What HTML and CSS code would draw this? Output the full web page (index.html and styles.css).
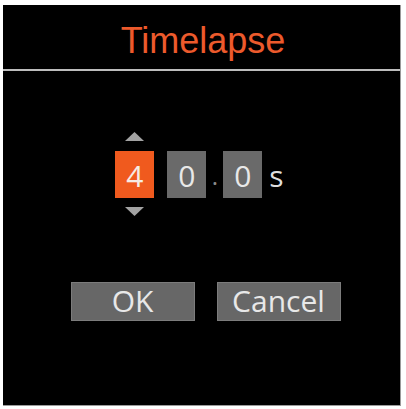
FILE: index.html
```html
<!DOCTYPE html>
<html>
<head>
<meta charset="utf-8">
<link rel="stylesheet" href="styles.css">
</head>
<body>
<div class="screen">
  <div class="header">Timelapse</div>
  <div class="picker">
    <div class="digit-col">
      <svg class="arrow arrow-up" width="19" height="9" viewBox="0 0 19 9"><polygon points="9.5,0 19,9 0,9"/></svg>
      <div class="box box-active">4</div>
      <svg class="arrow arrow-down" width="19" height="9" viewBox="0 0 19 9"><polygon points="0,0 19,0 9.5,9"/></svg>
    </div>
    <div class="box box-plain">0</div>
    <div class="sep">.</div>
    <div class="box box-plain">0</div>
    <div class="unit">s</div>
  </div>
  <div class="buttons">
    <div class="btn">OK</div>
    <div class="btn">Cancel</div>
  </div>
</div>
</body>
</html>
```
FILE: styles.css
```css
html, body {
  margin: 0;
  padding: 0;
  background: #ffffff;
}
body {
  width: 406px;
  height: 409px;
  overflow: hidden;
}
.screen {
  margin: 5px 0 0 3px;
  width: 398px;
  height: 401px;
  background: #000;
  border-right: 1px solid #9a9a9a;
  border-bottom: 1px solid #9a9a9a;
  box-sizing: border-box;
  font-family: "Open Sans", "Liberation Sans", sans-serif;
}
.header {
  padding-top: 15px;
  padding-bottom: 8px;
  height: 41px;
  line-height: 41px;
  text-align: center;
  font-family: "Liberation Sans", Arial, sans-serif;
  font-size: 36px;
  color: #ec5a2c;
  border-bottom: 2px solid #bdbdbd;
  padding-left: 3px;
}
.picker {
  margin-top: 61px;
  display: flex;
  justify-content: center;
  align-items: flex-start;
  padding-right: 4px;
}
.digit-col {
  display: flex;
  flex-direction: column;
  align-items: center;
}
.arrow {
  display: block;
  fill: #a3a3a3;
}
.arrow-up {
  margin-bottom: 10px;
}
.arrow-down {
  margin-top: 9px;
}
.box {
  width: 39px;
  height: 47px;
  box-sizing: border-box;
  padding-top: 2px;
  line-height: 45px;
  text-align: center;
  font-size: 30px;
}
.box-active {
  background: #f05a1e;
  color: #f6ece4;
}
.box-plain {
  margin-top: 19px;
  background: #6a6a6a;
  color: #e8e8e8;
}
.digit-col + .box-plain {
  margin-left: 13px;
}
.sep {
  margin-top: 19px;
  width: 17px;
  height: 47px;
  padding-top: 2px;
  box-sizing: border-box;
  line-height: 45px;
  text-align: center;
  font-size: 24px;
  color: #8a8a8a;
}
.unit {
  margin-top: 19px;
  margin-left: 7px;
  height: 47px;
  padding-top: 2px;
  box-sizing: border-box;
  line-height: 45px;
  font-size: 30px;
  color: #dedede;
}
.buttons {
  margin-top: 66px;
  display: flex;
  justify-content: center;
  gap: 22px;
  padding-left: 8px;
}
.btn {
  width: 124px;
  height: 39px;
  box-sizing: border-box;
  border: 1px solid #7c7c7c;
  background: #676767;
  color: #e8e8e8;
  text-align: center;
  font-size: 30px;
  line-height: 35px;
}
```
